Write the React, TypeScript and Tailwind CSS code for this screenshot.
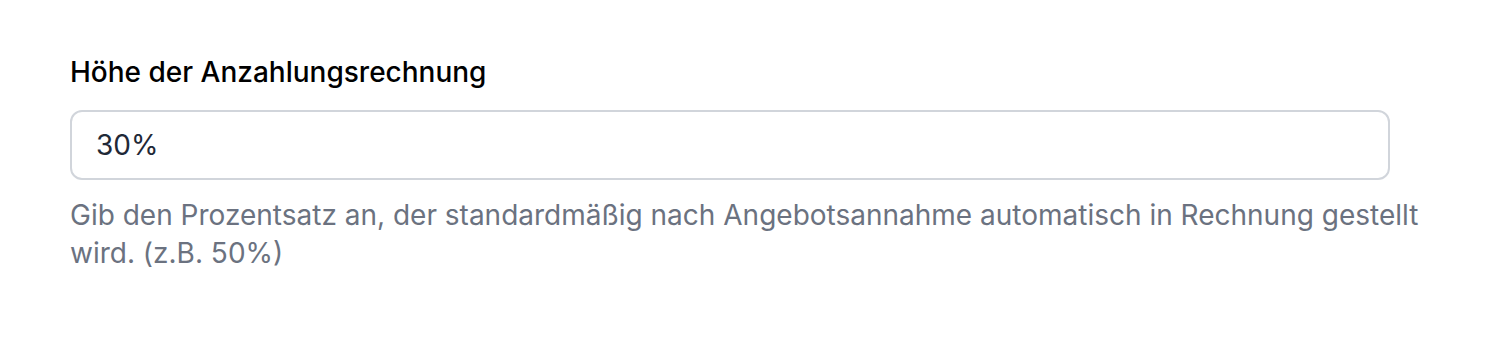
export default function App() {
  return (
    <div className="w-[1488px] h-[338px] bg-white pl-[70px] pt-[52px] font-['Inter',sans-serif]">
      <div className="w-[1360px]">
        <label className="block text-[28px] leading-[40px] font-medium text-black">
          Höhe der Anzahlungsrechnung
        </label>
        <div className="mt-[18px] w-[1320px]">
          <input
            type="text"
            defaultValue="30%"
            className="w-full h-[70px] rounded-[12px] border-2 border-[#d1d5db] bg-white px-[24px] text-[28px] text-[#1f2937] outline-none"
          />
        </div>
        <p className="mt-[16px] text-[28px] leading-[38px] text-[#6b7280]">
          Gib den Prozentsatz an, der standardmäßig nach Angebotsannahme automatisch in Rechnung gestellt wird. (z.B. 50%)
        </p>
      </div>
    </div>
  );
}
